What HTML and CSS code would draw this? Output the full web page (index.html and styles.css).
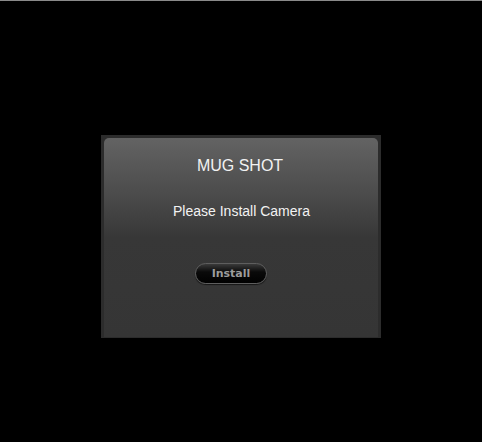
FILE: index.html
```html
<!DOCTYPE html>
<html>
<head>
<meta charset="utf-8">
<link rel="stylesheet" href="styles.css">
</head>
<body>
<div class="topline"></div>
<div class="stage">
  <div class="panel">
    <div class="inner">
      <div class="title">MUG SHOT</div>
      <div class="msg">Please Install Camera</div>
      <button class="install">Install</button>
    </div>
  </div>
</div>
</body>
</html>
```
FILE: styles.css
```css
html, body {
  margin: 0;
  padding: 0;
  background: #000;
  width: 482px;
  height: 442px;
  overflow: hidden;
}
.topline {
  height: 1px;
  background: #8a8a8a;
}
.stage {
  padding-top: 134px;
  padding-left: 101px;
}
.panel {
  width: 280px;
  height: 203px;
  box-sizing: border-box;
  background: #2c2c2c;
  padding: 3px 3px 1px 3px;
}
.inner {
  height: 100%;
  border-radius: 5px 5px 0 0;
  background: linear-gradient(to bottom, #636363 0px, #4c4c4c 55px, #373737 100px, #353535 199px);
  display: flex;
  flex-direction: column;
  align-items: center;
  font-family: "Liberation Sans", Arial, sans-serif;
  color: #f2f2f2;
}
.title {
  margin-top: 18px;
  font-size: 16px;
  line-height: 20px;
  margin-left: -2px;
}
.msg {
  margin-top: 26px;
  font-size: 14px;
  line-height: 18px;
  margin-left: 1px;
}
.install {
  align-self: flex-start;
  margin-top: 43px;
  margin-left: 91px;
  width: 72px;
  height: 21px;
  border-radius: 11px;
  border: 1px solid #5e5e5e;
  background: linear-gradient(to bottom, #3a3a3a 0px, #0a0a0a 8px, #000 20px);
  box-shadow: 0 1px 1px rgba(0,0,0,0.6);
  color: #9c9c9c;
  font-family: "DejaVu Sans", Verdana, sans-serif;
  font-weight: bold;
  font-size: 11px;
  padding: 0;
  line-height: 19px;
}
```
